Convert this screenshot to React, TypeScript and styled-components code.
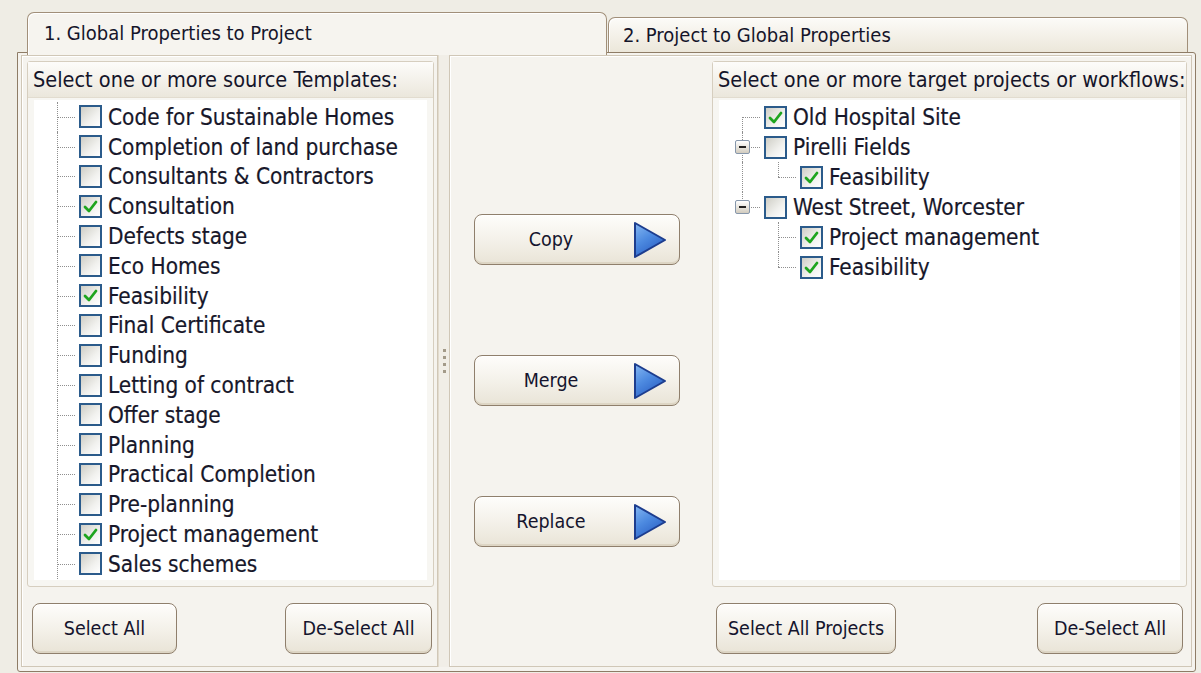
import React, { useId } from "react";
import styled, { createGlobalStyle } from "styled-components";

type GuideKind = "none" | "pass" | "tee" | "elbow" | "first";

type Node = {
  label: string;
  checked: boolean;
  guides: GuideKind[];
  expander?: boolean;
};

const templates: Node[] = [
  "Code for Sustainable Homes",
  "Completion of land purchase",
  "Consultants & Contractors",
  "Consultation",
  "Defects stage",
  "Eco Homes",
  "Feasibility",
  "Final Certificate",
  "Funding",
  "Letting of contract",
  "Offer stage",
  "Planning",
  "Practical Completion",
  "Pre-planning",
  "Project management",
  "Sales schemes",
].map((label) => ({
  label,
  checked: ["Consultation", "Feasibility", "Project management"].includes(label),
  guides: ["tee"],
}));

const projects: Node[] = [
  { label: "Old Hospital Site", checked: true, guides: ["first"] },
  { label: "Pirelli Fields", checked: false, guides: ["tee"], expander: true },
  { label: "Feasibility", checked: true, guides: ["pass", "elbow"] },
  { label: "West Street, Worcester", checked: false, guides: ["elbow"], expander: true },
  { label: "Project management", checked: true, guides: ["none", "tee"] },
  { label: "Feasibility", checked: true, guides: ["none", "elbow"] },
];

const GlobalStyle = createGlobalStyle`
  body {
    margin: 0;
    background: #efede5;
    font-family: "DejaVu Sans Condensed", "DejaVu Sans", sans-serif;
    font-stretch: condensed;
    color: #1b1b2b;
  }
`;

const Window = styled.div`
  width: 1201px;
  height: 673px;
  box-sizing: border-box;
  padding: 12px 5px 1px 17px;
  display: flex;
  flex-direction: column;
`;

const TabRow = styled.div`
  display: flex;
  align-items: flex-start;
  height: 43px;
  padding-left: 10px;
  margin-bottom: -3px;
  position: relative;
  z-index: 1;
`;

const Tab = styled.div<{ $active?: boolean }>`
  box-sizing: border-box;
  width: 580px;
  height: ${(p) => (p.$active ? "43px" : "35px")};
  margin-top: ${(p) => (p.$active ? "0" : "5px")};
  margin-left: ${(p) => (p.$active ? "0" : "1px")};
  padding: ${(p) => (p.$active ? "0 0 2px 16px" : "0 0 0 14px")};
  display: flex;
  align-items: center;
  font-size: 20px;
  color: #15152a;
  border: 1px solid #a18f79;
  border-bottom: none;
  border-radius: 7px 7px 0 0;
  background: ${(p) =>
    p.$active ? "#f6f4ef" : "linear-gradient(#fcfbf8, #ece7da)"};
  box-shadow: inset 1px 1px 0 #fff;
`;

const Panel = styled.div`
  box-sizing: border-box;
  width: 1179px;
  height: 620px;
  border: 1px solid #8e7c66;
  border-radius: 0 3px 3px 3px;
  background: #f5f3ee;
  padding: 2px 3px 4px 3px;
  display: flex;
`;

const Pane = styled.div<{ $width?: number }>`
  box-sizing: border-box;
  border: 1px solid #d0c7b7;
  box-shadow: inset 1px 1px 0 #fff;
  display: flex;
  ${(p) => (p.$width ? `width: ${p.$width}px;` : "flex: 1;")}
`;

const LeftCol = styled.div`
  flex: 1;
  display: flex;
  flex-direction: column;
  padding: 5px 3px 0 5px;
`;

const RightCol = styled.div`
  flex: 1;
  display: flex;
  flex-direction: column;
  padding: 5px 4px 0 0;
`;

const Splitter = styled.div`
  width: 10px;
  display: flex;
  flex-direction: column;
  align-items: center;
  justify-content: center;
  gap: 4px;
  background: #f1eee7;
  border-left: 1px solid #e2dbcd;
`;

const Grip = styled.span`
  width: 3px;
  height: 3px;
  background: #a39a89;
`;

const Group = styled.div`
  box-sizing: border-box;
  height: 526px;
  border: 1px solid #d6cebf;
  border-radius: 3px;
  background: #f7f6f2;
  display: flex;
  flex-direction: column;
`;

const GroupHeader = styled.div`
  height: 35px;
  display: flex;
  align-items: center;
  padding-left: 5px;
  font-size: 21.5px;
  white-space: nowrap;
  color: #15152a;
  background: linear-gradient(#fdfcfa, #ebe7dc);
  border-bottom: 1px solid #e2dccf;
`;

const ListBox = styled.div`
  flex: 1;
  margin: 2px 6px 6px 6px;
  padding: 2px 0 0 5px;
  background: #fff;
  overflow: hidden;
`;

const Row = styled.div<{ $h: number }>`
  display: flex;
  align-items: center;
  height: ${(p) => p.$h}px;
`;

const Guide = styled.span<{ $kind: GuideKind }>`
  position: relative;
  width: 36px;
  height: 100%;
  flex-shrink: 0;

  &::before {
    content: "";
    display: ${(p) => (p.$kind === "none" ? "none" : "block")};
    position: absolute;
    left: 18px;
    top: ${(p) => (p.$kind === "first" ? "50%" : "0")};
    bottom: ${(p) => (p.$kind === "elbow" ? "50%" : "0")};
    border-left: 1px dotted #8f8f8f;
  }

  &::after {
    content: "";
    display: ${(p) => (p.$kind === "none" || p.$kind === "pass" ? "none" : "block")};
    position: absolute;
    left: 18px;
    right: 0;
    top: 50%;
    border-top: 1px dotted #8f8f8f;
  }
`;

const Expander = styled.span`
  position: absolute;
  z-index: 1;
  left: 11px;
  top: 50%;
  transform: translateY(-50%);
  width: 15px;
  height: 14px;
  box-sizing: border-box;
  border: 1px solid #8797ab;
  border-radius: 2px;
  background: linear-gradient(#ffffff, #d2ccbf);
  display: flex;
  align-items: center;
  justify-content: center;

  &::before {
    content: "";
    width: 7px;
    height: 2px;
    background: #222;
  }
`;

const Box = styled.span`
  width: 23px;
  height: 23px;
  box-sizing: border-box;
  margin-left: 4px;
  flex-shrink: 0;
  border: 2px solid #2b5b8b;
  background: linear-gradient(135deg, #cfcec6, #f1f1ee 60%, #ffffff);
  display: flex;
  align-items: center;
  justify-content: center;
`;

const Label = styled.span`
  margin-left: 6px;
  font-size: 22.4px;
  white-space: nowrap;
  color: #17172a;
  -webkit-text-stroke: 0.2px #17172a;
`;

const ButtonRow = styled.div<{ $pad: string }>`
  display: flex;
  justify-content: space-between;
  margin-top: 16px;
  padding: ${(p) => p.$pad};
`;

const Button = styled.button<{ $w: number }>`
  width: ${(p) => p.$w}px;
  height: 51px;
  padding: 0;
  font-family: inherit;
  font-stretch: condensed;
  font-size: 19.5px;
  color: #15152e;
  border: 1px solid #8f7f6c;
  border-radius: 8px;
  background: linear-gradient(#fefdfb, #f3f0e8 55%, #e9e4d7);
  box-shadow: inset 0 -2px 0 #ddd5c4, inset 0 1px 0 #fff;
`;

const MiddleCol = styled.div`
  width: 262px;
  display: flex;
  flex-direction: column;
  gap: 90px;
  padding: 158px 0 0 24px;
  box-sizing: border-box;
`;

const ActionButton = styled(Button)`
  display: flex;
  align-items: center;
  padding-right: 12px;
`;

const ActionLabel = styled.span`
  flex: 1;
  text-align: center;
  padding-right: 6px;
`;

const Check = () => (
  <svg width="15" height="13" viewBox="0 0 15 13">
    <path d="M2 7 L6 11 L13 2" fill="none" stroke="#1ea51f" strokeWidth="2.8" strokeLinecap="round" strokeLinejoin="round" />
  </svg>
);

const Arrow = () => {
  const id = useId();
  return (
    <svg width="34" height="38" viewBox="0 0 34 38">
      <defs>
        <linearGradient id={id} x1="0" y1="0" x2="0.6" y2="1">
          <stop offset="0" stopColor="#86b8f2" />
          <stop offset="0.5" stopColor="#4d8ae0" />
          <stop offset="1" stopColor="#2a5fc4" />
        </linearGradient>
      </defs>
      <polygon points="2,2 32,19 2,36" fill={`url(#${id})`} stroke="#1d3d8e" strokeWidth="2" strokeLinejoin="round" />
    </svg>
  );
};

const TreeList = ({ nodes, rowHeight }: { nodes: Node[]; rowHeight: number }) => (
  <ListBox>
    {nodes.map((n, i) => (
      <Row key={i} $h={rowHeight}>
        {n.guides.map((g, j) => (
          <Guide key={j} $kind={g}>
            {n.expander && j === n.guides.length - 1 && <Expander />}
          </Guide>
        ))}
        <Box>{n.checked && <Check />}</Box>
        <Label>{n.label}</Label>
      </Row>
    ))}
  </ListBox>
);

const App = () => (
  <Window>
    <GlobalStyle />
    <TabRow>
      <Tab $active>1. Global Properties to Project</Tab>
      <Tab>2. Project to Global Properties</Tab>
    </TabRow>
    <Panel>
      <Pane $width={417}>
        <LeftCol>
          <Group>
            <GroupHeader>Select one or more source Templates:</GroupHeader>
            <TreeList nodes={templates} rowHeight={29.8} />
          </Group>
          <ButtonRow $pad="0 2px 0 5px">
            <Button $w={145}>Select All</Button>
            <Button $w={147}>De-Select All</Button>
          </ButtonRow>
        </LeftCol>
      </Pane>
      <Splitter>
        <Grip />
        <Grip />
        <Grip />
        <Grip />
      </Splitter>
      <Pane>
        <MiddleCol>
          {["Copy", "Merge", "Replace"].map((a) => (
            <ActionButton key={a} $w={206}>
              <ActionLabel>{a}</ActionLabel>
              <Arrow />
            </ActionButton>
          ))}
        </MiddleCol>
        <RightCol>
          <Group>
            <GroupHeader>Select one or more target projects or workflows:</GroupHeader>
            <TreeList nodes={projects} rowHeight={30} />
          </Group>
          <ButtonRow $pad="0 4px">
            <Button $w={180}>Select All Projects</Button>
            <Button $w={146}>De-Select All</Button>
          </ButtonRow>
        </RightCol>
      </Pane>
    </Panel>
  </Window>
);

export default App;
